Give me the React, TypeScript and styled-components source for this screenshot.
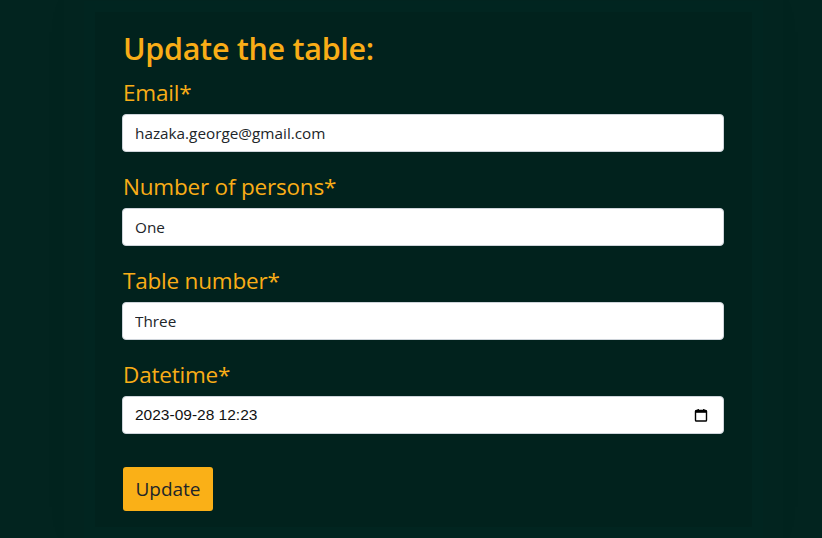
import React from "react";
import styled, { createGlobalStyle } from "styled-components";

const GlobalStyle = createGlobalStyle`
  html, body { margin: 0; padding: 0; background: #02241f; }
  body { font-family: "Open Sans", "Noto Sans", sans-serif; }
  * { box-sizing: border-box; }
`;

const Page = styled.div`
  width: 822px;
  height: 538px;
  overflow: hidden;
  padding: 12px 70px 0 95px;
  background: #02241f;
`;

const Card = styled.form`
  width: 657px;
  height: 515px;
  background: #01221d;
  box-shadow: 0 0 0 11px #012520, 0 0 0 31px #02241f, 0 0 40px rgba(0, 0, 0, 0.25);
  padding: 17px 28px 0 28px;
  display: flex;
  flex-direction: column;
`;

const Title = styled.h2`
  margin: 0 0 11px 0;
  font-size: 30.5px;
  font-weight: 600;
  line-height: 38px;
  color: #f9ad17;
  letter-spacing: -0.3px;
`;

const Group = styled.div`
  display: flex;
  flex-direction: column;
  margin-bottom: 20px;
`;

const Label = styled.label`
  font-size: 22.5px;
  line-height: 30px;
  color: #f9ad17;
  margin-bottom: 6px;
  letter-spacing: -0.2px;
`;

const Input = styled.input`
  width: 602px;
  height: 38px;
  margin-left: -1px;
  border: 1px solid #ced4da;
  border-radius: 4px;
  background: #fff;
  padding: 0 12px;
  font-family: "Open Sans", "Noto Sans", sans-serif;
  font-size: 15.3px;
  color: #212529;
  outline: none;
`;

const DateBox = styled.div`
  width: 602px;
  height: 38px;
  margin-left: -1px;
  border: 1px solid #ced4da;
  border-radius: 4px;
  background: #fff;
  padding: 0 15px 0 12px;
  display: flex;
  align-items: center;
  justify-content: space-between;
  font-family: "Liberation Sans", Arial, sans-serif;
  font-size: 15.5px;
  color: #111;
`;

const Button = styled.button`
  align-self: flex-start;
  margin-top: 13px;
  width: 90px;
  height: 44px;
  border: none;
  border-radius: 3px;
  background: #fab017;
  color: #212529;
  font-family: "Open Sans", "Noto Sans", sans-serif;
  font-size: 19px;
  padding: 0;
  cursor: pointer;
`;

const CalendarIcon = () => (
  <svg width="14" height="14" viewBox="0 0 14 14">
    <rect x="1.5" y="2.5" width="11" height="10.5" rx="0.8" fill="none" stroke="#000" strokeWidth="1.4" />
    <rect x="1.5" y="2.5" width="11" height="2.3" fill="#000" />
    <rect x="3.5" y="1" width="1.4" height="2" fill="#000" />
    <rect x="9.1" y="1" width="1.4" height="2" fill="#000" />
  </svg>
);

export default function App() {
  return (
    <>
      <GlobalStyle />
      <Page>
        <Card onSubmit={(e) => e.preventDefault()}>
          <Title>Update the table:</Title>
          <Group>
            <Label>Email*</Label>
            <Input defaultValue="hazaka.george@gmail.com" />
          </Group>
          <Group>
            <Label>Number of persons*</Label>
            <Input defaultValue="One" />
          </Group>
          <Group>
            <Label>Table number*</Label>
            <Input defaultValue="Three" />
          </Group>
          <Group>
            <Label>Datetime*</Label>
            <DateBox>
              <span>2023-09-28 12:23</span>
              <CalendarIcon />
            </DateBox>
          </Group>
          <Button type="submit">Update</Button>
        </Card>
      </Page>
    </>
  );
}
